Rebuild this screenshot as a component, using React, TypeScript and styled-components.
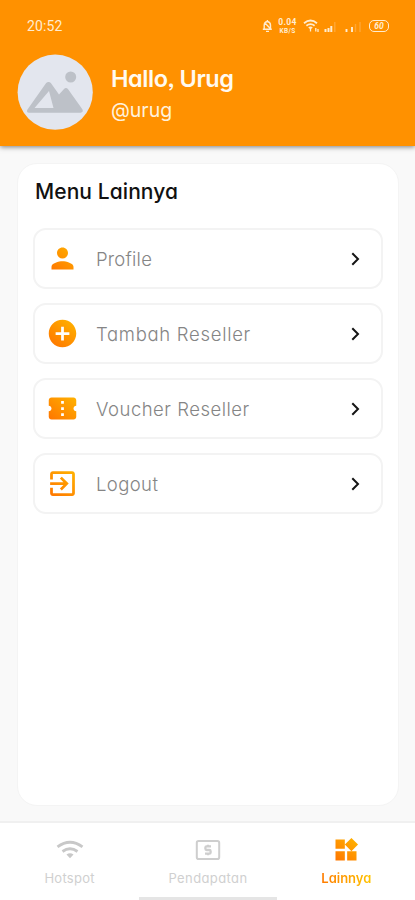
import React from "react";
import styled, { createGlobalStyle } from "styled-components";

const GlobalStyle = createGlobalStyle`
  * { box-sizing: border-box; }
  html, body { margin: 0; background: #f9f9f9; }
  body { font-family: Inter, "Open Sans", sans-serif; font-feature-settings: "cv11", "ss03"; }
`;

const Screen = styled.div`
  width: 415px;
  height: 900px;
  display: flex;
  flex-direction: column;
  background: #f9f9f9;
  overflow: hidden;
`;

const Header = styled.header`
  height: 146px;
  flex: none;
  background: #ff9100;
  box-shadow: 0 1px 5px rgba(0, 0, 0, 0.5);
  color: #fff;
`;

const StatusBar = styled.div`
  height: 54px;
  padding: 17px 26px 0 27px;
  display: flex;
  justify-content: space-between;
  color: #ffecd0;
`;

const Clock = styled.span`
  font-family: Roboto, sans-serif;
  font-size: 14px;
  line-height: 18px;
  letter-spacing: 0.1px;
`;

const StatusIcons = styled.div`
  display: flex;
  align-items: center;
  height: 18px;
`;

const Speed = styled.div`
  width: 19px;
  margin: 0 6px 0 5px;
  display: flex;
  flex-direction: column;
  align-items: center;
  font: 700 8.5px/10px Roboto, sans-serif;
  letter-spacing: 0.3px;
  white-space: nowrap;
`;

const SpeedUnit = styled.div`
  font-size: 6.5px;
  line-height: 8px;
`;

const Battery = styled.div`
  width: 20px;
  height: 12px;
  margin-left: 6px;
  border: 1.5px solid #ffecd0;
  border-radius: 5px;
  font: italic 700 8.5px/10px Roboto, sans-serif;
  text-align: center;
`;

const UserRow = styled.div`
  display: flex;
  padding-left: 17px;
`;

const UserText = styled.div`
  padding: 9px 0 0 18px;
`;

const Label = styled.div<{ $size: number; $line: number; $weight?: number; $spacing?: number; $color: string }>`
  font-size: ${(p) => p.$size}px;
  line-height: ${(p) => p.$line}px;
  font-weight: ${(p) => p.$weight ?? 400};
  letter-spacing: ${(p) => p.$spacing ?? 0}px;
  color: ${(p) => p.$color};
  white-space: nowrap;
`;

const Card = styled.main`
  height: 643px;
  flex: none;
  margin: 17px 16px 0 17px;
  padding: 14px 17px 0;
  border: 1px solid #f4f4f4;
  border-radius: 20px;
  background: #fff;
`;

const MenuList = styled.div`
  display: grid;
  gap: 14px;
  margin: 22px -2px 0;
`;

const MenuRow = styled.div`
  height: 61px;
  display: flex;
  align-items: center;
  padding: 0 15px 0 11px;
  border: 2px solid #f3f3f3;
  border-radius: 13px;
  svg { flex: none; }
`;

const MenuText = styled(Label)`
  flex: 1;
  padding: 1px 0 0 17px;
`;

const NavBar = styled.nav`
  height: 79px;
  flex: none;
  margin-top: 15px;
  border-top: 2px solid #f0f0f0;
  background: #fff;
  display: flex;
  flex-direction: column;
`;

const Tabs = styled.div`
  height: 74px;
  display: grid;
  grid-template-columns: repeat(3, 1fr);
`;

const Tab = styled.div`
  display: flex;
  flex-direction: column;
  align-items: center;
  padding: 13px 0 0 1px;
`;

const ActiveLabel = styled(Label)`
  background: linear-gradient(90deg, #ff7a00, #ffc400);
  background-clip: text;
  -webkit-background-clip: text;
`;

const HomeBar = styled.div`
  width: 138px;
  height: 3px;
  margin: 0 auto;
  background: #e5e5e5;
`;

type IconName = "person" | "add" | "ticket" | "exit" | "widgets";

const iconPaths: Record<IconName, string> = {
  person:
    "M12 12c2.21 0 4-1.79 4-4s-1.79-4-4-4-4 1.79-4 4 1.79 4 4 4zm0 2c-2.67 0-8 1.34-8 4v2h16v-2c0-2.66-5.33-4-8-4z",
  add: "M12 2C6.48 2 2 6.48 2 12s4.48 10 10 10 10-4.48 10-10S17.52 2 12 2zm5 11h-4v4h-2v-4H7v-2h4V7h2v4h4v2z",
  ticket:
    "M22 10V6c0-1.11-.9-2-2-2H4c-1.1 0-1.99.89-1.99 2v4c1.1 0 1.99.9 1.99 2s-.89 2-2 2v4c0 1.1.9 2 2 2h16c1.1 0 2-.9 2-2v-4c-1.1 0-2-.9-2-2s.9-2 2-2zm-9 7.5h-2v-2h2v2zm0-4.5h-2v-2h2v2zm0-4.5h-2v-2h2v2z",
  exit:
    "M10.09 15.59L11.5 17l5-5-5-5-1.41 1.41L12.67 11H3v2h9.67l-2.58 2.59zM19 3H5c-1.11 0-2 .9-2 2v4h2V5h14v14H5v-4H3v4c0 1.1.89 2 2 2h14c1.1 0 2-.9 2-2V5c0-1.1-.9-2-2-2z",
  widgets: "M13 13v8h8v-8h-8zM3 21h8v-8H3v8zM3 3v8h8V3H3zm13.66-1.31L11 7.34 16.66 13l5.66-5.66-5.66-5.65z",
};

function GradientIcon({ name, size }: { name: IconName; size: number }) {
  const id = `fill-${name}`;
  return (
    <svg width={size} height={size} viewBox="0 0 24 24">
      <defs>
        <linearGradient id={id} gradientUnits="userSpaceOnUse" x1="4" y1="22" x2="20" y2="2">
          <stop offset="0" stopColor="#ff7500" />
          <stop offset="1" stopColor="#ffb300" />
        </linearGradient>
      </defs>
      <path d={iconPaths[name]} fill={`url(#${id})`} />
    </svg>
  );
}

const Chevron = () => (
  <svg width="20" height="20" viewBox="0 0 20 20" fill="none" stroke="#151515" strokeWidth="2">
    <path d="M6.3 4.3 12 10l-5.7 5.7" />
  </svg>
);

const Avatar = () => (
  <svg width="76" height="76" viewBox="0 0 76 76">
    <circle cx="38.2" cy="38.2" r="37.6" fill="#e3e6ee" />
    <circle cx="53.7" cy="23" r="5.5" fill="#bdc1c8" />
    <path
      fill="#bdc1c8"
      fillRule="evenodd"
      d="M12 58.7c-2 0-2.6-1.8-1.5-3.3L28.8 29.4c1.5-2 4-2 5.4 0l7.8 11 4.8-5.2c1.5-1.6 3-1.5 4.3.1L65 54.8c1.5 2 .8 3.9-1.5 3.9ZM17.5 54H36.5L32 37Z"
    />
  </svg>
);

const StatusGlyphs = () => (
  <svg width="60" height="18" viewBox="0 0 60 18" fill="none" stroke="#ffecd0">
    <path d="M1 6.2Q7.5.8 14 6.2M3.4 8.7q4.1-3.2 8.2 0M5.8 11q1.7-1.2 3.4 0" strokeWidth="1.8" />
    <path d="M7.5 11v3.5M12.8 11v3.5M15 12v3" strokeWidth="1.3" />
    <path d="M22.5 12v3M25.5 11v4M28.3 9v6" strokeWidth="2" />
    <path d="M31.8 5v10M52.5 7v8M57 5v10" strokeWidth="1.4" opacity=".25" />
    <path d="M43.5 12v3M49 10v5" strokeWidth="1.9" />
  </svg>
);

const MuteBell = () => (
  <svg width="11" height="14" viewBox="0 0 11 14" fill="none" stroke="#ffecd0" strokeWidth="1.4">
    <path d="M2.2 10V6.2C2.2 4 3.3 2.8 5.3 2.5c2 .3 3.2 1.7 3.2 3.7V10M.8 10.3h9M4 12.4h3M2.5 3.5l6 6.2M5.4 1v2" />
  </svg>
);

const WifiIcon = () => (
  <svg width="28" height="28" viewBox="0 0 28 28" fill="none" stroke="#c8c8c8" strokeWidth="2.8">
    <path d="M1.5 10.9Q14 1.5 26.5 10.9M6.5 15.5q7.5-5.4 15 0" />
    <path d="m10.5 18.5 3.5 3.7 3.5-3.7q-3.5-2.5-7 0Z" fill="#c8c8c8" stroke="none" />
  </svg>
);

const MoneyIcon = () => (
  <svg width="28" height="28" viewBox="0 0 28 28" fill="none" stroke="#cecece" strokeWidth="2">
    <rect x="2.8" y="4.9" width="22.4" height="18.2" rx="1.8" />
    <path d="M17 10.3h-4.4c-.8 0-1.2.4-1.2 1.2v1.3c0 .8.4 1.2 1.2 1.2h2.8c.8 0 1.2.4 1.2 1.2v1.3c0 .8-.4 1.2-1.2 1.2H11M14 8.7v1.6M14 17.7v1.6" strokeWidth="2.3" />
  </svg>
);

const menu: { icon: IconName; text: string; spacing: number }[] = [
  { icon: "person", text: "Profile", spacing: 0.2 },
  { icon: "add", text: "Tambah Reseller", spacing: 0.7 },
  { icon: "ticket", text: "Voucher Reseller", spacing: 0.5 },
  { icon: "exit", text: "Logout", spacing: 0.4 },
];

export default function App() {
  return (
    <>
      <GlobalStyle />
      <Screen>
        <Header>
          <StatusBar>
            <Clock>20:52</Clock>
            <StatusIcons>
              <MuteBell />
              <Speed>
                <div>0.04</div>
                <SpeedUnit>KB/S</SpeedUnit>
              </Speed>
              <StatusGlyphs />
              <Battery>60</Battery>
            </StatusIcons>
          </StatusBar>
          <UserRow>
            <Avatar />
            <UserText>
              <Label $size={23.5} $line={32} $weight={600} $spacing={-0.45} $color="#fffaf0">Hallo, Urug</Label>
              <Label $size={19.5} $line={31} $spacing={0} $color="#fff1dc">@urug</Label>
            </UserText>
          </UserRow>
        </Header>
        <Card>
          <Label $size={21} $line={28} $weight={500} $spacing={0.08} $color="#111">Menu Lainnya</Label>
          <MenuList>
            {menu.map((item) => (
              <MenuRow key={item.text}>
                <GradientIcon name={item.icon} size={33} />
                <MenuText $size={18.5} $line={27} $weight={300} $spacing={item.spacing} $color="#858585">
                  {item.text}
                </MenuText>
                <Chevron />
              </MenuRow>
            ))}
          </MenuList>
        </Card>
        <NavBar>
          <Tabs>
            <Tab>
              <WifiIcon />
              <Label $size={13} $line={29} $spacing={0.3} $color="#d0d0d0">Hotspot</Label>
            </Tab>
            <Tab>
              <MoneyIcon />
              <Label $size={13} $line={29} $spacing={0.4} $color="#d0d0d0">Pendapatan</Label>
            </Tab>
            <Tab>
              <GradientIcon name="widgets" size={28} />
              <ActiveLabel $size={13} $line={29} $weight={600} $color="transparent">Lainnya</ActiveLabel>
            </Tab>
          </Tabs>
          <HomeBar />
        </NavBar>
      </Screen>
    </>
  );
}
